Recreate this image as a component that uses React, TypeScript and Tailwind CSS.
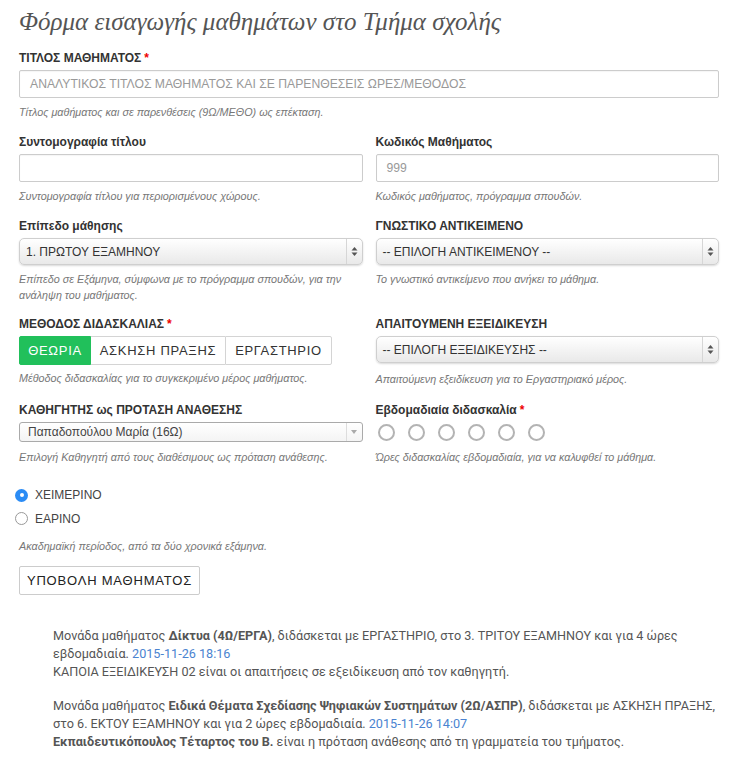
import React from "react";

const Star = () => <span className="text-[#e00] ml-[3px]">*</span>;

function Label({ children, star }: { children: React.ReactNode; star?: boolean }) {
  return (
    <div className="text-[12px] font-bold text-[#333] leading-[14px] mb-[5px]">
      {children}
      {star && <Star />}
    </div>
  );
}

function Help({ children, mt = "mt-[6px]" }: { children: React.ReactNode; mt?: string }) {
  return <div className={`text-[10.8px] italic text-[#777] leading-[16px] ${mt}`}>{children}</div>;
}

function TextInput({ placeholder }: { placeholder?: string }) {
  return (
    <div className="h-[28px] border border-[#ccc] rounded-[2px] bg-white flex items-center px-[10px] text-[12.2px] text-[#999] shadow-[inset_0_1px_1px_rgba(0,0,0,0.04)]">
      {placeholder}
    </div>
  );
}

function UpDown() {
  return (
    <svg width="7" height="11" viewBox="0 0 7 11">
      <path d="M3.5 1 L6.5 4.5 H0.5 Z" fill="#555" />
      <path d="M3.5 10 L6.5 6.5 H0.5 Z" fill="#555" />
    </svg>
  );
}

function NativeSelect({ value }: { value: string }) {
  return (
    <div className="h-[27px] border border-[#cfcfcf] rounded-[5px] bg-gradient-to-b from-white to-[#e9e9e9] flex items-stretch shadow-[0_1px_2px_rgba(0,0,0,0.15)]">
      <div className="flex-1 flex items-center pl-[6px] text-[12px] text-[#333]">{value}</div>
      <div className="w-[16px] border-l border-[#d6d6d6] flex items-center justify-center">
        <UpDown />
      </div>
    </div>
  );
}

export default function App() {
  return (
    <div className="w-[748px] min-h-[764px] bg-white font-['Liberation_Sans',Arial,sans-serif]">
      <div className="pl-[19px] w-[719px] pt-[6px]">
        <h1 className="font-['Liberation_Serif','DejaVu_Serif',serif] italic text-[25px] leading-[32px] text-[#555]">
          Φόρμα εισαγωγής μαθημάτων στο Τμήμα σχολής
        </h1>

        <div className="mt-[13px]">
          <Label star>ΤΙΤΛΟΣ ΜΑΘΗΜΑΤΟΣ</Label>
          <TextInput placeholder="ΑΝΑΛΥΤΙΚΟΣ ΤΙΤΛΟΣ ΜΑΘΗΜΑΤΟΣ ΚΑΙ ΣΕ ΠΑΡΕΝΘΕΣΕΙΣ ΩΡΕΣ/ΜΕΘΟΔΟΣ" />
          <Help>Τίτλος μαθήματος και σε παρενθέσεις (9Ω/ΜΕΘΟ) ως επέκταση.</Help>
        </div>

        <div className="grid grid-cols-2 gap-x-[13px] mt-[15px]">
          <div>
            <Label>Συντομογραφία τίτλου</Label>
            <TextInput />
            <Help>Συντομογραφία τίτλου για περιορισμένους χώρους.</Help>
          </div>
          <div>
            <Label>Κωδικός Μαθήματος</Label>
            <TextInput placeholder="999" />
            <Help>Κωδικός μαθήματος, πρόγραμμα σπουδών.</Help>
          </div>
        </div>

        <div className="grid grid-cols-2 gap-x-[13px] mt-[15px]">
          <div>
            <Label>Επίπεδο μάθησης</Label>
            <NativeSelect value="1. ΠΡΩΤΟΥ ΕΞΑΜΗΝΟΥ" />
            <Help>
              Επίπεδο σε Εξάμηνα, σύμφωνα με το πρόγραμμα σπουδών, για την
              <br />
              ανάληψη του μαθήματος.
            </Help>
          </div>
          <div>
            <Label>ΓΝΩΣΤΙΚΟ ΑΝΤΙΚΕΙΜΕΝΟ</Label>
            <NativeSelect value="-- ΕΠΙΛΟΓΗ ΑΝΤΙΚΕΙΜΕΝΟΥ --" />
            <Help>Το γνωστικό αντικείμενο που ανήκει το μάθημα.</Help>
          </div>
        </div>

        <div className="grid grid-cols-2 gap-x-[13px] mt-[14px]">
          <div>
            <Label star>ΜΕΘΟΔΟΣ ΔΙΔΑΣΚΑΛΙΑΣ</Label>
            <div className="flex h-[29px] mt-[1px] text-[13px] tracking-[0.7px]">
              <div className="w-[72px] bg-[#21c05b] text-white flex items-center justify-center rounded-l-[2px] border border-[#21c05b]">
                ΘΕΩΡΙΑ
              </div>
              <div className="w-[134px] border-y border-[#d4d4d4] text-[#333] flex items-center justify-center">
                ΑΣΚΗΣΗ ΠΡΑΞΗΣ
              </div>
              <div className="w-[107px] border border-[#d4d4d4] text-[#333] flex items-center justify-center rounded-r-[2px]">
                ΕΡΓΑΣΤΗΡΙΟ
              </div>
            </div>
            <Help mt="mt-[5px]">Μέθοδος διδασκαλίας για το συγκεκριμένο μέρος μαθήματος.</Help>
          </div>
          <div>
            <Label>ΑΠΑΙΤΟΥΜΕΝΗ ΕΞΕΙΔΙΚΕΥΣΗ</Label>
            <NativeSelect value="-- ΕΠΙΛΟΓΗ ΕΞΕΙΔΙΚΕΥΣΗΣ --" />
            <Help mt="mt-[8px]">Απαιτούμενη εξειδίκευση για το Εργαστηριακό μέρος.</Help>
          </div>
        </div>

        <div className="grid grid-cols-2 gap-x-[13px] mt-[16px]">
          <div>
            <Label>ΚΑΘΗΓΗΤΗΣ ως ΠΡΟΤΑΣΗ ΑΝΑΘΕΣΗΣ</Label>
            <div className="h-[20px] border border-[#aaa] rounded-[3px] bg-gradient-to-b from-white to-[#f4f4f4] flex items-stretch">
              <div className="flex-1 flex items-center pl-[8px] text-[12px] text-[#444]">Παπαδοπούλου Μαρία (16Ω)</div>
              <div className="w-[16px] border-l border-[#ddd] flex items-center justify-center">
                <svg width="6" height="4" viewBox="0 0 6 4">
                  <path d="M0 0 H6 L3 4 Z" fill="#aaa" />
                </svg>
              </div>
            </div>
            <Help mt="mt-[7px]">Επιλογή Καθηγητή από τους διαθέσιμους ως πρόταση ανάθεσης.</Help>
          </div>
          <div>
            <Label star>Εβδομαδιαία διδασκαλία</Label>
            <div className="flex gap-[13px] pl-[2px] h-[20px] items-center">
              {[0, 1, 2, 3, 4, 5].map((i) => (
                <div key={i} className="w-[17px] h-[17px] rounded-full border-2 border-[#b3b3b3]" />
              ))}
            </div>
            <Help mt="mt-[7px]">Ώρες διδασκαλίας εβδομαδιαία, για να καλυφθεί το μάθημα.</Help>
          </div>
        </div>

        <div className="mt-[18px] -ml-[4px]">
          <div className="flex items-center gap-[7px] h-[24px]">
            <div className="w-[13px] h-[13px] rounded-full bg-[#2b8cf5] flex items-center justify-center">
              <div className="w-[4px] h-[4px] rounded-full bg-white" />
            </div>
            <span className="text-[12px] text-[#444]">ΧΕΙΜΕΡΙΝΟ</span>
          </div>
          <div className="flex items-center gap-[7px] h-[23px]">
            <div className="w-[13px] h-[13px] rounded-full border border-[#999] bg-white" />
            <span className="text-[12px] text-[#444]">ΕΑΡΙΝΟ</span>
          </div>
        </div>
        <Help mt="mt-[8px]">Ακαδημαϊκή περίοδος, από τα δύο χρονικά εξάμηνα.</Help>

        <div className="mt-[12px] w-[181px] h-[29px] border border-[#ccc] rounded-[2px] flex items-center justify-center text-[13px] text-[#222] tracking-[0.8px]">
          ΥΠΟΒΟΛΗ ΜΑΘΗΜΑΤΟΣ
        </div>
      </div>

      <div className="pl-[53px] pr-[12px] pt-[32px] font-['Roboto',sans-serif] text-[12.65px] leading-[18px] text-[#555]">
        <p>
          Μονάδα μαθήματος <b className="font-bold">Δίκτυα (4Ω/ΕΡΓΑ)</b>, διδάσκεται με ΕΡΓΑΣΤΗΡΙΟ, στο 3. ΤΡΙΤΟΥ ΕΞΑΜΗΝΟΥ και για 4 ώρες
          εβδομαδιαία. <span className="text-[#4a83d0]">2015-11-26 18:16</span>
          <br />
          ΚΑΠΟΙΑ ΕΞΕΙΔΙΚΕΥΣΗ 02 είναι οι απαιτήσεις σε εξειδίκευση από τον καθηγητή.
        </p>
        <p className="mt-[16px]">
          Μονάδα μαθήματος <b className="font-bold">Ειδικά Θέματα Σχεδίασης Ψηφιακών Συστημάτων (2Ω/ΑΣΠΡ)</b>, διδάσκεται με ΑΣΚΗΣΗ ΠΡΑΞΗΣ,
          στο 6. ΕΚΤΟΥ ΕΞΑΜΗΝΟΥ και για 2 ώρες εβδομαδιαία. <span className="text-[#4a83d0]">2015-11-26 14:07</span>
          <br />
          <b className="font-bold">Εκπαιδευτικόπουλος Τέταρτος του Β.</b> είναι η πρόταση ανάθεσης από τη γραμματεία του τμήματος.
        </p>
      </div>
    </div>
  );
}
